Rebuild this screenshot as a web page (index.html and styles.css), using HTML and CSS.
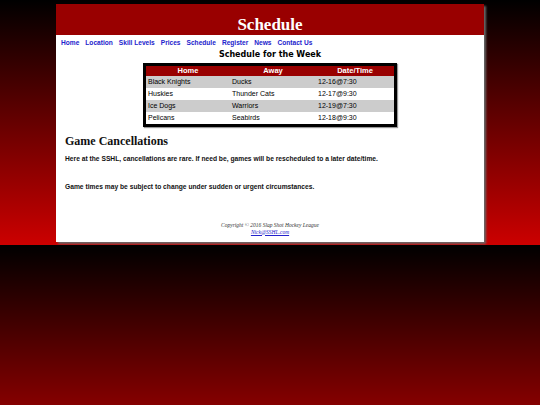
FILE: index.html
```html
<!DOCTYPE html>
<html>
<head>
<meta charset="utf-8">
<title>Schedule</title>
<link rel="stylesheet" href="styles.css">
</head>
<body>
<div class="wrapper">
  <header class="header">
    <h1 class="title">Schedule</h1>
  </header>
  <nav class="nav">
    <a href="#">Home</a>
    <a href="#">Location</a>
    <a href="#">Skill Levels</a>
    <a href="#">Prices</a>
    <a href="#">Schedule</a>
    <a href="#">Register</a>
    <a href="#">News</a>
    <a href="#">Contact Us</a>
  </nav>
  <main class="content">
    <h2 class="week">Schedule for the Week</h2>
    <table class="sched">
      <thead>
        <tr><th>Home</th><th>Away</th><th>Date/Time</th></tr>
      </thead>
      <tbody>
        <tr class="alt"><td>Black Knights</td><td>Ducks</td><td>12-16@7:30</td></tr>
        <tr><td>Huskies</td><td>Thunder Cats</td><td>12-17@9:30</td></tr>
        <tr class="alt"><td>Ice Dogs</td><td>Warriors</td><td>12-19@7:30</td></tr>
        <tr><td>Pelicans</td><td>Seabirds</td><td>12-18@9:30</td></tr>
      </tbody>
    </table>
    <h3 class="section">Game Cancellations</h3>
    <p class="para">Here at the SSHL, cancellations are rare. If need be, games will be rescheduled to a later date/time.</p>
    <p class="para para2">Game times may be subject to change under sudden or urgent circumstances.</p>
  </main>
  <footer class="footer">
    <div>Copyright &copy; 2016 Slap Shot Hockey League</div>
    <a href="#">Nick@SSHL.com</a>
  </footer>
</div>
</body>
</html>
```
FILE: styles.css
```css
html {
  margin: 0;
}
body {
  margin: 0;
  padding: 4px 0 3px;
  background: linear-gradient(#000000, #cc0000);
  font-family: "Liberation Sans", Arial, sans-serif;
}
.wrapper {
  width: 428px;
  margin: 0 auto;
  background: #ffffff;
  box-shadow: 2px 2px 2px #666666;
}
.header {
  background: #990000;
  height: 31px;
  display: flex;
  align-items: flex-end;
  justify-content: center;
}
.title {
  margin: 0 0 1px;
  color: #ffffff;
  font-family: "Liberation Serif", Georgia, serif;
  font-size: 17px;
  font-weight: bold;
  line-height: 18px;
}
.nav {
  display: flex;
  gap: 6px;
  padding: 2px 5px 0;
  height: 11px;
  align-items: center;
}
.nav a {
  color: #2222cc;
  font-size: 6.6px;
  font-weight: bold;
  text-decoration: none;
  line-height: 11px;
}
.content {
  padding: 0 9px;
}
.week {
  margin: 0;
  text-align: center;
  font-family: "DejaVu Sans", Verdana, sans-serif;
  font-size: 8px;
  line-height: 13px;
  font-weight: bold;
  color: #000000;
}
.sched {
  margin: 2px auto 0;
  width: 254px;
  border: 3px solid #000000;
  border-collapse: collapse;
  font-size: 7px;
  box-shadow: 1px 1px 1px #999999;
}
.sched th {
  background: #990000;
  color: #ffffff;
  font-weight: bold;
  height: 10px;
  padding: 0;
  line-height: 10px;
  text-align: center;
  font-size: 7.5px;
}
.sched td {
  padding: 0 2px;
  height: 12px;
  line-height: 12px;
  color: #000000;
}
.sched td:nth-child(1) { width: 80px; }
.sched td:nth-child(2) { width: 82px; }
.sched tr.alt td {
  background: #cccccc;
}
.section {
  margin: 7px 0 0;
  font-family: "Liberation Serif", Georgia, serif;
  font-size: 12px;
  line-height: 14px;
  font-weight: bold;
  color: #111111;
}
.para {
  margin: 6px 0 0;
  font-size: 6.7px;
  line-height: 9px;
  font-weight: bold;
  color: #111111;
}
.para2 {
  margin-top: 19px;
}
.footer {
  padding: 31px 0 7px;
  text-align: center;
  font-family: "Liberation Serif", "Times New Roman", serif;
  font-style: italic;
  font-size: 5.5px;
  line-height: 6.5px;
  color: #333333;
}
.footer a {
  color: #2222cc;
}
```
